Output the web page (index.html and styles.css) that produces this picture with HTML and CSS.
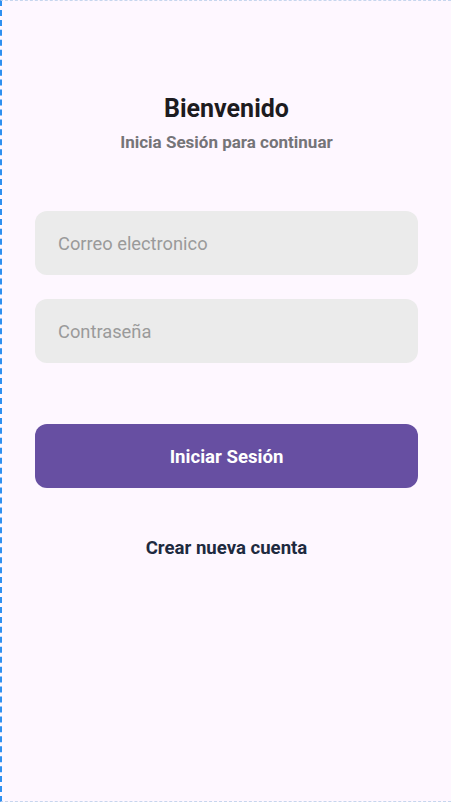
FILE: index.html
```html
<!DOCTYPE html>
<html lang="es">
<head>
<meta charset="utf-8">
<title>Login</title>
<link rel="stylesheet" href="styles.css">
</head>
<body>
<main class="screen">
  <header class="head">
    <h1 class="title">Bienvenido</h1>
    <p class="subtitle">Inicia Sesión para continuar</p>
  </header>
  <form class="form">
    <div class="field"><span class="placeholder">Correo electronico</span></div>
    <div class="field"><span class="placeholder">Contraseña</span></div>
    <button type="button" class="btn">Iniciar Sesión</button>
  </form>
  <a class="link">Crear nueva cuenta</a>
</main>
</body>
</html>
```
FILE: styles.css
```css
html, body {
  margin: 0;
  padding: 0;
  height: 100%;
}
body {
  background: #fef7ff;
  font-family: Roboto, "Noto Sans", sans-serif;
  box-sizing: border-box;
  border-left: 2px dashed #2f8ff0;
  border-top: 1px dashed #c6d6ee;
  border-bottom: 1px dashed #c6d6ee;
}
.screen {
  display: flex;
  flex-direction: column;
  align-items: center;
  padding: 93px 33px 0 33px;
}
.head {
  display: flex;
  flex-direction: column;
  align-items: center;
}
.title {
  margin: 0;
  font-size: 25px;
  font-weight: 700;
  color: #1d1b20;
  line-height: 29px;
}
.subtitle {
  margin: 9px 0 0 0;
  font-size: 17px;
  font-weight: 700;
  color: #757478;
  line-height: 20px;
}
.form {
  align-self: stretch;
  display: flex;
  flex-direction: column;
  margin-top: 59px;
}
.field {
  height: 64px;
  background: #ebebeb;
  border-radius: 12px;
  display: flex;
  align-items: center;
  padding: 0 23px;
  margin-bottom: 24px;
}
.field + .field {
  margin-bottom: 0;
}
.placeholder {
  font-size: 18.3px;
  color: #9a9a9a;
  padding-top: 1px;
}
.btn {
  margin-top: 61px;
  height: 64px;
  padding: 2px 0 0 0;
  border: none;
  border-radius: 12px;
  background: #674fa2;
  color: #ffffff;
  font-family: Roboto, "Noto Sans", sans-serif;
  font-size: 18.6px;
  font-weight: 700;
}
.link {
  margin-top: 49px;
  font-size: 18.6px;
  font-weight: 700;
  color: #1e2a40;
}
```
